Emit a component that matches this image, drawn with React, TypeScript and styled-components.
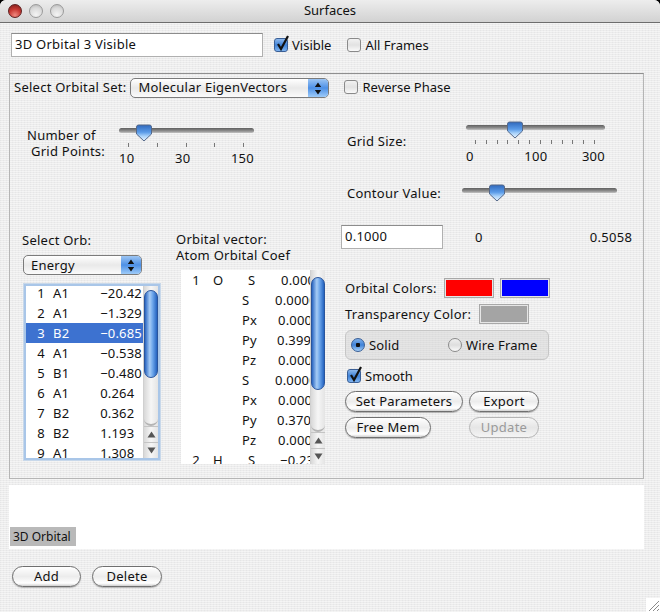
import React from 'react';
import styled, { createGlobalStyle } from 'styled-components';

const GlobalStyle = createGlobalStyle`
  html, body {
    margin: 0;
    padding: 0;
    background: #000;
  }
  * { box-sizing: border-box; }
`;

const Win = styled.div`
  width: 660px;
  height: 612px;
  overflow: hidden;
  position: relative;
  border-radius: 6px 6px 0 0;
  font-family: "Noto Sans", "DejaVu Sans", sans-serif;
  font-size: 13px;
  color: #111;
  background-color: #ececec;
  background-image:
    repeating-linear-gradient(0deg, rgba(255,255,255,.45) 0 1px, transparent 1px 2px),
    repeating-linear-gradient(90deg, rgba(205,205,210,.22) 0 1px, transparent 1px 3px);
`;

const TitleBar = styled.div`
  height: 23px;
  display: flex;
  align-items: center;
  justify-content: center;
  position: relative;
  background: linear-gradient(#ededed, #d2d2d2);
  border-bottom: 1px solid #6d6d6d;
  font-size: 13px;
  padding-bottom: 3px;
`;

const Lights = styled.div`
  position: absolute;
  left: 8px;
  top: 4px;
  display: flex;
  gap: 7px;
`;

const Light = styled.span<{ $red?: boolean }>`
  width: 14px;
  height: 14px;
  border-radius: 50%;
  border: 1px solid ${p => (p.$red ? '#5e1f1f' : '#9a9a9a')};
  background: ${p =>
    p.$red
      ? 'radial-gradient(circle at 50% 85%, #f08a80 0, #c93a34 50%, #7a1c1a 100%)'
      : 'radial-gradient(circle at 50% 80%, #f4f4f4 0, #d9d9d9 60%, #b0b0b0 100%)'};
`;

const Body = styled.div`
  padding: 10px 16px 0 9px;
  display: flex;
  flex-direction: column;
`;

const NameRow = styled.div`
  display: flex;
  align-items: center;
  height: 24px;
  padding-left: 2px;
`;

const Field = styled.div<{ $w: number; $h: number }>`
  width: ${p => p.$w}px;
  height: ${p => p.$h}px;
  flex: none;
  background: #fff;
  border: 1px solid #b0b0b0;
  border-top-color: #8c8c8c;
  padding: 0 0 3px 3px;
  display: flex;
  align-items: center;
  letter-spacing: 0.25px;
`;

const CheckLabel = styled.div<{ $ml: number }>`
  display: flex;
  align-items: center;
  gap: 4px;
  margin-left: ${p => p.$ml}px;
  white-space: nowrap;
`;

const CheckBox = styled.span<{ $on?: boolean }>`
  width: 14px;
  height: 14px;
  flex: none;
  position: relative;
  border-radius: 3px;
  border: 1px solid ${p => (p.$on ? '#3a5f96' : '#8a8a8a')};
  background: ${p =>
    p.$on ? 'linear-gradient(#8db8ec, #3f82d8 50%, #7fb4f0)' : 'linear-gradient(#f2f2f2, #e2e2e2 50%, #fafafa)'};
  svg { position: absolute; left: 0; top: -4px; }
`;

const Tick = () => (
  <svg width="15" height="16" viewBox="0 0 15 16">
    <path d="M3 9 L6 14 L13 1" fill="none" stroke="#111" strokeWidth="2.2" />
  </svg>
);

const Group = styled.div`
  margin-top: 16px;
  width: 635px;
  height: 406px;
  border: 1px solid #b5b5b5;
  border-top-color: #8f8f8f;
  padding: 4px 0 0 4px;
`;

const Caption = styled.div<{ $ml?: number; $mt?: number }>`
  line-height: 16px;
  letter-spacing: 0.25px;
  margin-left: ${p => p.$ml ?? 0}px;
  margin-top: ${p => p.$mt ?? 0}px;
`;

const SetRow = styled.div`
  display: flex;
  align-items: center;
  height: 20px;
  ${Caption}, ${CheckLabel} {
    margin-top: -2px;
  }
`;

const Popup = styled.div<{ $w: number; $ml?: number; $mt?: number }>`
  width: ${p => p.$w}px;
  height: 20px;
  margin-left: ${p => p.$ml ?? 0}px;
  margin-top: ${p => p.$mt ?? 0}px;
  flex: none;
  display: flex;
  align-items: center;
  justify-content: space-between;
  border: 1px solid #7b7b7b;
  border-radius: 5px;
  overflow: hidden;
  background: linear-gradient(#fff, #e9e9e9 50%, #fbfbfb);
  padding-left: 7px;
  letter-spacing: 0.25px;
`;

const PopupText = styled.span<{ $up: number }>`
  margin-top: -${p => p.$up}px;
`;

const PopupArrows = styled.span`
  width: 20px;
  height: 20px;
  display: flex;
  align-items: center;
  justify-content: center;
  background: linear-gradient(#a5cbf5, #4d90e6 50%, #a7d2fb);
`;

const Columns = styled.div`
  display: flex;
`;

const LeftCol = styled.div`
  width: 327px;
  flex: none;
  display: flex;
  flex-direction: column;
`;

const RightCol = styled.div`
  flex: 1;
  display: flex;
  flex-direction: column;
`;

const PointsRow = styled.div`
  display: flex;
  margin-top: 26px;
  height: 109px;
`;

const PointsLabel = styled.div`
  width: 91px;
  padding-top: 3px;
  line-height: 16px;
  flex: none;
  letter-spacing: 0.25px;
`;

const LabelLine = styled.div<{ $indent: number }>`
  padding-left: ${p => p.$indent}px;
  white-space: nowrap;
`;

const SliderBox = styled.div<{ $w: number; $ml?: number }>`
  width: ${p => p.$w}px;
  margin-left: ${p => p.$ml ?? 0}px;
  flex: none;
`;

const Track = styled.div`
  height: 18px;
  position: relative;
  display: flex;
  align-items: center;
  &::before {
    content: '';
    width: 100%;
    height: 5px;
    border-radius: 3px;
    margin-top: -5px;
    background: linear-gradient(#5f5f5f, #8f8f8f 60%, #c4c4c4);
  }
`;

const ThumbWrap = styled.svg<{ $x: number }>`
  position: absolute;
  top: 0;
  left: ${p => p.$x - 9}px;
`;

const Thumb = ({ x }: { x: number }) => (
  <ThumbWrap $x={x} width="18" height="18" viewBox="0 0 18 18">
    <defs>
      <linearGradient id="thumbFill" x1="0" y1="0" x2="0" y2="1">
        <stop offset="0" stopColor="#2f68bc" />
        <stop offset="0.45" stopColor="#5a9be8" />
        <stop offset="0.7" stopColor="#a9d2fa" />
        <stop offset="1" stopColor="#e8f3fd" />
      </linearGradient>
    </defs>
    <path d="M1.5 3 Q1.5 1 3.5 1 H14.5 Q16.5 1 16.5 3 V10 L9 17 L1.5 10 Z" fill="url(#thumbFill)" stroke="#55698a" />
  </ThumbWrap>
);

const Ticks = styled.div<{ $pl: number; $pr: number }>`
  display: flex;
  justify-content: space-between;
  padding: 0 ${p => p.$pr}px 0 ${p => p.$pl}px;
  height: 4px;
  margin-top: 1px;
  span {
    width: 1px;
    height: 4px;
    background: #777;
  }
`;

const TickLabels = styled.div<{ $mt: number }>`
  display: flex;
  justify-content: space-between;
  margin-top: ${p => p.$mt}px;
  line-height: 16px;
  letter-spacing: 0.25px;
`;

const TickLabel = styled.span<{ $shift?: number }>`
  padding-left: ${p => p.$shift ?? 0}px;
`;

const OrbArea = styled.div`
  display: flex;
  padding-left: 9px;
`;

const OrbCol = styled.div`
  width: 137px;
  flex: none;
  margin-right: 16px;
`;

const ListBox = styled.div`
  margin-top: 8px;
  width: 138px;
  height: 178px;
  background: #fff;
  border: 3px solid #a9c6e8;
  outline: 1px solid #c8d8ea;
  outline-offset: -1px;
  display: flex;
  overflow: hidden;
`;

const Rows = styled.div<{ $top?: number }>`
  flex: 1;
  min-width: 0;
  overflow: hidden;
  margin-top: ${p => p.$top ?? 0}px;
`;

const OrbRow = styled.div<{ $sel?: boolean }>`
  height: 20px;
  display: grid;
  grid-template-columns: 19px 34px 1fr;
  align-items: center;
  white-space: nowrap;
  letter-spacing: 0.2px;
  background: ${p => (p.$sel ? '#3d72d0' : 'transparent')};
  color: ${p => (p.$sel ? '#fff' : '#111')};
  span:nth-child(1) { text-align: right; }
  span:nth-child(2) { padding-left: 8px; }
  span:nth-child(3) { text-align: right; padding-right: 1px; }
`;

const ScrollBar = styled.div`
  width: 15px;
  flex: none;
  display: flex;
  flex-direction: column;
  background: linear-gradient(90deg, #d8d8d8, #f6f6f6 50%, #e4e4e4);
  border-left: 1px solid #d0d0d0;
`;

const ScrollThumb = styled.div<{ $top: number; $h: number }>`
  margin-top: ${p => p.$top}px;
  height: ${p => p.$h}px;
  flex: none;
  border-radius: 7px;
  border: 1px solid #2a559c;
  background: linear-gradient(90deg, #2a66c2, #a6ccf6 40%, #6aa4ea 65%, #2463c0);
`;

const ScrollGap = styled.div`
  flex: 1;
  border-radius: 0 0 7px 7px;
  border-bottom: 2px solid #b4b4b4;
`;

const ScrollButton = styled.div`
  height: 16px;
  flex: none;
  display: flex;
  align-items: center;
  justify-content: center;
  border-top: 1px solid #c4c4c4;
`;

const VectorCol = styled.div`
  width: 150px;
  flex: none;
  margin-top: -2px;
`;

const VectorBox = styled.div`
  margin: 7px 0 0 5px;
  width: 144px;
  height: 194px;
  background: #fff;
  display: flex;
  overflow: hidden;
`;

const VecRow = styled.div`
  height: 20px;
  display: grid;
  grid-template-columns: 19px 42px 33px 1fr;
  align-items: center;
  white-space: nowrap;
  overflow: hidden;
  letter-spacing: 0.2px;
`;

const VecIndex = styled.span`
  text-align: right;
`;

const VecAtom = styled.span`
  padding-left: 13px;
`;

const VecCell = styled.span<{ $pl: number }>`
  padding-left: ${p => p.$pl}px;
  overflow: hidden;
`;

const GridRow = styled.div`
  display: flex;
  margin-top: 23px;
  height: 48px;
`;

const SideLabel = styled.div<{ $w: number; $mt: number }>`
  width: ${p => p.$w}px;
  flex: none;
  padding: ${p => p.$mt}px 0 0 6px;
  line-height: 16px;
  letter-spacing: 0.25px;
`;

const ContourRow = styled.div`
  display: flex;
  margin-top: 15px;
  height: 18px;
`;

const ValueRow = styled.div`
  display: flex;
  align-items: center;
  margin-top: 23px;
  height: 24px;
  letter-spacing: 0.3px;
`;

const ValueMin = styled.span`
  margin-left: 32px;
`;

const ValueMax = styled.span`
  margin-left: 107px;
`;

const ColorPanel = styled.div`
  padding: 29px 0 0 4px;
  display: flex;
  flex-direction: column;
`;

const ColorRow = styled.div`
  display: flex;
  align-items: center;
  height: 20px;
  margin-bottom: 6px;
  letter-spacing: 0.25px;
`;

const Swatch = styled.div<{ $color: string; $ml: number }>`
  width: 50px;
  height: 20px;
  margin-left: ${p => p.$ml}px;
  flex: none;
  background: ${p => p.$color};
  border: 2px solid #e6e6e6;
  outline: 1px solid #a8a8a8;
  outline-offset: -1px;
`;

const RadioGroup = styled.div`
  width: 204px;
  height: 30px;
  display: flex;
  align-items: center;
  padding: 0 5px;
  border: 1px solid #c6c6c6;
  border-radius: 6px;
  background: rgba(200, 200, 200, 0.35);
  letter-spacing: 0.15px;
`;

const RadioLabel = styled.div<{ $w?: number }>`
  display: flex;
  align-items: center;
  gap: 4px;
  width: ${p => (p.$w ? `${p.$w}px` : 'auto')};
`;

const Radio = styled.span<{ $on?: boolean }>`
  width: 14px;
  height: 14px;
  border-radius: 50%;
  flex: none;
  border: 1px solid ${p => (p.$on ? '#3a5f96' : '#8a8a8a')};
  background: ${p =>
    p.$on
      ? 'radial-gradient(circle, #111 0 2px, transparent 2.5px), linear-gradient(#7fb0ea, #3f82d8 50%, #a6d0f8)'
      : 'linear-gradient(#f0f0f0, #dedede 50%, #fbfbfb)'};
`;

const SmoothRow = styled.div`
  margin: 8px 0 7px 2px;
  height: 16px;
  display: flex;
`;

const ButtonRow = styled.div`
  display: flex;
  height: 21px;
  margin-bottom: 5px;
`;

const PushButton = styled.div<{ $w: number; $ml?: number; $off?: boolean }>`
  width: ${p => p.$w}px;
  height: 21px;
  margin-left: ${p => p.$ml ?? 0}px;
  flex: none;
  display: flex;
  align-items: center;
  justify-content: center;
  padding-bottom: 1px;
  letter-spacing: 0.25px;
  border-radius: 11px;
  border: 1px solid ${p => (p.$off ? '#b4b4b4' : '#6f6f6f')};
  box-shadow: ${p => (p.$off ? 'none' : '0 1px 1px rgba(0, 0, 0, 0.25)')};
  color: ${p => (p.$off ? '#9a9a9a' : '#111')};
  background: ${p =>
    p.$off ? 'linear-gradient(#f6f6f6, #e6e6e6 50%, #f4f4f4)' : 'linear-gradient(#fff, #ececec 50%, #fff 85%, #cfcfcf)'};
`;

const SurfaceList = styled.div`
  margin-top: 6px;
  width: 635px;
  height: 64px;
  background: #fff;
  display: flex;
  align-items: flex-end;
  padding: 0 0 3px 1px;
`;

const SurfaceTag = styled.div`
  width: 66px;
  height: 19px;
  background: #b9b9b9;
  display: flex;
  align-items: center;
  padding-left: 3px;
  font-size: 12px;
`;

const BottomRow = styled.div`
  display: flex;
  margin-top: 17px;
  padding-left: 3px;
  gap: 11px;
`;

const Grip = styled.svg`
  position: absolute;
  right: 0;
  bottom: 0;
`;

const Updown = () => (
  <svg width="8" height="13" viewBox="0 0 8 13">
    <path d="M4 0.5 L7.2 5 H0.8 Z M4 12.5 L0.8 8 H7.2 Z" fill="#111" />
  </svg>
);

const orbitals = [
  ['1', 'A1', '\u221220.42'],
  ['2', 'A1', '\u22121.329'],
  ['3', 'B2', '\u22120.685'],
  ['4', 'A1', '\u22120.538'],
  ['5', 'B1', '\u22120.480'],
  ['6', 'A1', '0.264\u2007'],
  ['7', 'B2', '0.362\u2007'],
  ['8', 'B2', '1.193\u2007'],
  ['9', 'A1', '1.308\u2007'],
];

// the value column is centred in the original list, so each row starts elsewhere
const coefs = [
  { idx: '1', atom: 'O', orb: 'S', orbPad: 6, value: '0.0000', valuePad: 6 },
  { idx: '', atom: '', orb: 'S', orbPad: 0, value: '0.0000', valuePad: 0 },
  { idx: '', atom: '', orb: 'Px', orbPad: 0, value: '0.0000', valuePad: 3 },
  { idx: '', atom: '', orb: 'Py', orbPad: 0, value: '0.3999', valuePad: 2 },
  { idx: '', atom: '', orb: 'Pz', orbPad: 0, value: '0.0000', valuePad: 3 },
  { idx: '', atom: '', orb: 'S', orbPad: 0, value: '0.0000', valuePad: 0 },
  { idx: '', atom: '', orb: 'Px', orbPad: 0, value: '0.0000', valuePad: 3 },
  { idx: '', atom: '', orb: 'Py', orbPad: 0, value: '0.3700', valuePad: 2 },
  { idx: '', atom: '', orb: 'Pz', orbPad: 0, value: '0.0000', valuePad: 3 },
  { idx: '2', atom: 'H', orb: 'S', orbPad: 6, value: '\u22120.2300', valuePad: 5 },
];

const Scroller = ({ thumbTop, thumbH }: { thumbTop: number; thumbH: number }) => (
  <ScrollBar>
    <ScrollThumb $top={thumbTop} $h={thumbH} />
    <ScrollGap />
    <ScrollButton>
      <svg width="9" height="7" viewBox="0 0 9 7"><path d="M4.5 0.5 L8.5 6.5 H0.5 Z" fill="#555" /></svg>
    </ScrollButton>
    <ScrollButton>
      <svg width="9" height="7" viewBox="0 0 9 7"><path d="M4.5 6.5 L0.5 0.5 H8.5 Z" fill="#555" /></svg>
    </ScrollButton>
  </ScrollBar>
);

export default function App() {
  return (
    <>
      <GlobalStyle />
      <Win>
        <TitleBar>
          <Lights>
            <Light $red />
            <Light />
            <Light />
          </Lights>
          Surfaces
        </TitleBar>
        <Body>
          <NameRow>
            <Field $w={252} $h={24}>3D Orbital 3 Visible</Field>
            <CheckLabel $ml={11}>
              <CheckBox $on><Tick /></CheckBox>
              Visible
            </CheckLabel>
            <CheckLabel $ml={16}>
              <CheckBox />
              All Frames
            </CheckLabel>
          </NameRow>

          <Group>
            <SetRow>
              <Caption>Select Orbital Set:</Caption>
              <Popup $w={199} $ml={4}>
                <PopupText $up={2}>Molecular EigenVectors</PopupText>
                <PopupArrows><Updown /></PopupArrows>
              </Popup>
              <CheckLabel $ml={15}>
                <CheckBox />
                Reverse Phase
              </CheckLabel>
            </SetRow>

            <Columns>
              <LeftCol>
                <PointsRow>
                  <PointsLabel>
                    <LabelLine $indent={13}>Number of</LabelLine>
                    <LabelLine $indent={17}>Grid Points:</LabelLine>
                  </PointsLabel>
                  <SliderBox $w={135} $ml={14}>
                    <Track><Thumb x={25} /></Track>
                    <Ticks $pl={9} $pr={10}>
                      {Array.from({ length: 5 }).map((_, i) => <span key={i} />)}
                    </Ticks>
                    <TickLabels $mt={3}>
                      <TickLabel>10</TickLabel>
                      <TickLabel>30</TickLabel>
                      <TickLabel>150</TickLabel>
                    </TickLabels>
                  </SliderBox>
                </PointsRow>
                <OrbArea>
                  <OrbCol>
                    <Caption $ml={-1} $mt={-1}>Select Orb:</Caption>
                    <Popup $w={119} $mt={7}>
                      <PopupText $up={0}>Energy</PopupText>
                      <PopupArrows><Updown /></PopupArrows>
                    </Popup>
                    <ListBox>
                      <Rows $top={-3}>
                        {orbitals.map(o => (
                          <OrbRow key={o[0]} $sel={o[0] === '3'}>
                            <span>{o[0]}</span><span>{o[1]}</span><span>{o[2]}</span>
                          </OrbRow>
                        ))}
                      </Rows>
                      <Scroller thumbTop={4} thumbH={88} />
                    </ListBox>
                  </OrbCol>
                  <VectorCol>
                    <Caption>Orbital vector:<br />Atom Orbital Coef</Caption>
                    <VectorBox>
                      <Rows>
                        {coefs.map((c, i) => (
                          <VecRow key={i}>
                            <VecIndex>{c.idx}</VecIndex>
                            <VecAtom>{c.atom}</VecAtom>
                            <VecCell $pl={c.orbPad}>{c.orb}</VecCell>
                            <VecCell $pl={c.valuePad}>{c.value}</VecCell>
                          </VecRow>
                        ))}
                      </Rows>
                      <Scroller thumbTop={7} thumbH={113} />
                    </VectorBox>
                  </VectorCol>
                </OrbArea>
              </LeftCol>

              <RightCol>
                <GridRow>
                  <SideLabel $w={125} $mt={12}>Grid Size:</SideLabel>
                  <SliderBox $w={139}>
                    <Track><Thumb x={49} /></Track>
                    <Ticks $pl={9} $pr={10}>
                      {Array.from({ length: 12 }).map((_, i) => <span key={i} />)}
                    </Ticks>
                    <TickLabels $mt={4}>
                      <TickLabel>0</TickLabel>
                      <TickLabel $shift={16}>100</TickLabel>
                      <TickLabel>300</TickLabel>
                    </TickLabels>
                  </SliderBox>
                </GridRow>
                <ContourRow>
                  <SideLabel $w={121} $mt={1}>Contour Value:</SideLabel>
                  <SliderBox $w={155}>
                    <Track><Thumb x={35} /></Track>
                  </SliderBox>
                </ContourRow>
                <ValueRow>
                  <Field $w={102} $h={24}>0.1000</Field>
                  <ValueMin>0</ValueMin>
                  <ValueMax>0.5058</ValueMax>
                </ValueRow>
                <ColorPanel>
                  <ColorRow>
                    Orbital Colors:
                    <Swatch $color="#ff0000" $ml={7} />
                    <Swatch $color="#0000ff" $ml={6} />
                  </ColorRow>
                  <ColorRow>
                    Transparency Color:
                    <Swatch $color="#a4a4a4" $ml={8} />
                  </ColorRow>
                  <RadioGroup>
                    <RadioLabel $w={97}><Radio $on />Solid</RadioLabel>
                    <RadioLabel><Radio />Wire Frame</RadioLabel>
                  </RadioGroup>
                  <SmoothRow>
                    <CheckLabel $ml={0}>
                      <CheckBox $on><Tick /></CheckBox>
                      Smooth
                    </CheckLabel>
                  </SmoothRow>
                  <ButtonRow>
                    <PushButton $w={118}>Set Parameters</PushButton>
                    <PushButton $w={70} $ml={6}>Export</PushButton>
                  </ButtonRow>
                  <ButtonRow>
                    <PushButton $w={86}>Free Mem</PushButton>
                    <PushButton $w={70} $ml={38} $off>Update</PushButton>
                  </ButtonRow>
                </ColorPanel>
              </RightCol>
            </Columns>
          </Group>

          <SurfaceList>
            <SurfaceTag>3D Orbital</SurfaceTag>
          </SurfaceList>

          <BottomRow>
            <PushButton $w={69}>Add</PushButton>
            <PushButton $w={70}>Delete</PushButton>
          </BottomRow>
        </Body>
        <Grip width="14" height="14" viewBox="0 0 14 14">
          <rect width="14" height="14" fill="#fff" />
          <path d="M3 13 L13 3 M7 13 L13 7 M11 13 L13 11" stroke="#8a8a8a" strokeWidth="1" />
        </Grip>
      </Win>
    </>
  );
}
